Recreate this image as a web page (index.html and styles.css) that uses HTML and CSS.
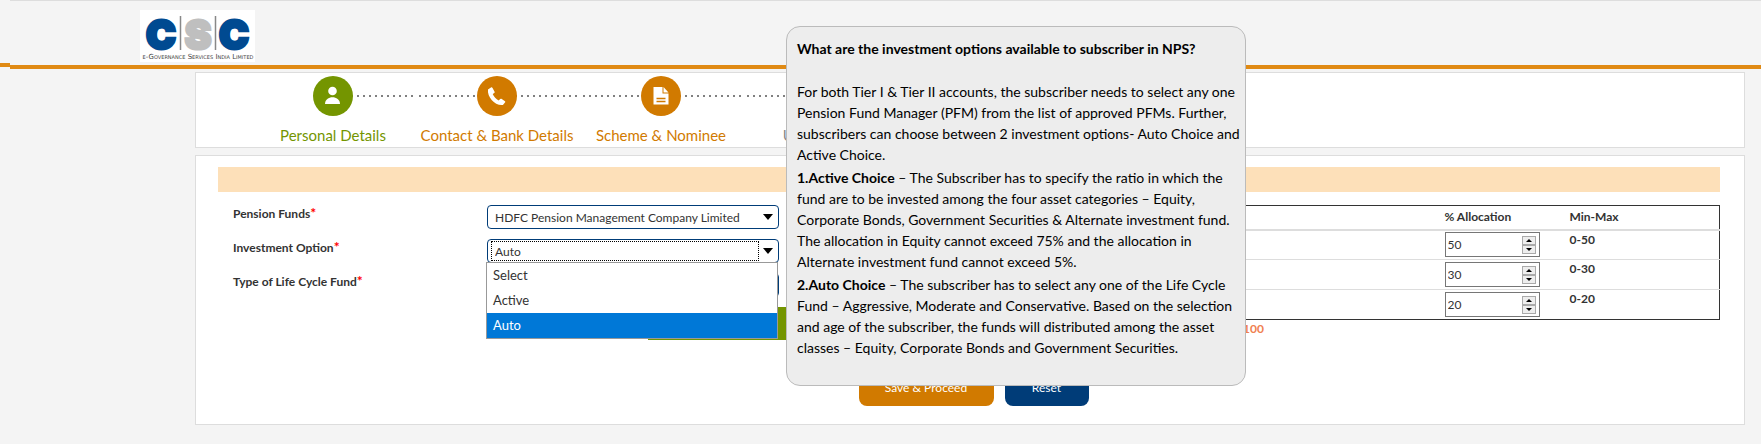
FILE: index.html
```
<!DOCTYPE html>
<html lang="en">
<head>
  <meta charset="UTF-8">
  <meta name="viewport" content="width=device-width, initial-scale=1.0">
  <title>NPS - Scheme &amp; Nominee</title>
  <link rel="stylesheet" href="styles.css">
</head>
<body>
  <div class="top">
    <div class="edge"></div>
    <header class="header">
      <svg class="logo" width="115" height="52" viewBox="0 0 115 52" role="img" aria-label="CSC e-Governance Services India Limited">
        <rect width="115" height="52" fill="#fff"/>
        <g class="logo-letters">
          <text x="21" y="39" fill="#004a91" stroke="#004a91">C</text>
          <text x="58" y="39" fill="#bfbfbf" stroke="#bfbfbf">S</text>
          <text x="94" y="39" fill="#004a91" stroke="#004a91">C</text>
        </g>
        <path d="M40.500 6v34M75.500 6v34" stroke="#888" stroke-width="1.500"/>
        <text class="logo-tag" x="58" y="49">e-Governance Services India Limited</text>
      </svg>
    </header>
  </div>

  <main class="main">
    <!-- Progress steps -->
    <section class="panel">
      <ol class="steps">
        <li class="step done first">
          <span class="step-icon">
            <svg width="40" height="40" viewBox="0 0 40 40"><circle cx="19.500" cy="15" r="4.300" fill="#fff"/><path d="M12 28c0-9 15-9 15 0z" fill="#fff"/></svg>
          </span>
          <span class="step-name">Personal Details</span>
        </li>
        <li class="step active">
          <span class="step-icon">
            <svg width="40" height="40" viewBox="0 0 40 40"><path d="M11 13.500L14.300 11.300Q15 11 15.400 11.700L17.600 15.700Q17.900 16.400 17.300 16.900L15.700 18.100C17 21 19 23 21.700 24.400L23.200 22.900Q23.700 22.500 24.400 22.800L28 25.200Q28.500 25.700 28.200 26.300L25.900 29C18 30 10 21 11 13.500z" fill="#fff"/></svg>
          </span>
          <span class="step-name">Contact &amp; Bank Details</span>
        </li>
        <li class="step active">
          <span class="step-icon">
            <svg width="40" height="40" viewBox="0 0 40 40"><path d="M12.500 11h9v6.500h6V28.500h-15z" fill="#fff"/><path d="M22.500 11l5 5.500h-5z" fill="#fff"/><path d="M15.500 22.500h9M15.500 25.500h9" stroke="#d17a00" stroke-width="1.300"/></svg>
          </span>
          <span class="step-name">Scheme &amp; Nominee</span>
        </li>
        <li class="step">
          <span class="step-icon"></span>
          <span class="step-name">Upload Docs</span>
        </li>
      </ol>
    </section>

    <section class="panel form-panel">
      <div class="banner"></div>
      <form class="form">
        <div class="fields">
          <div class="field">
            <label for="fund">Pension Funds<span class="req">*</span></label>
            <div class="select">
              <select id="fund"><option>HDFC Pension Management Company Limited</option></select>
            </div>
          </div>
          <div class="field">
            <label for="option">Investment Option<span class="req">*</span></label>
            <div class="select open">
              <select id="option">
                <option>Select</option>
                <option>Active</option>
                <option selected>Auto</option>
              </select>
              <ul class="list" role="listbox" aria-label="Investment Option">
                <li role="option">Select</li>
                <li role="option">Active</li>
                <li role="option" class="current" aria-selected="true">Auto</li>
              </ul>
            </div>
          </div>
          <div class="field">
            <label for="cycle">Type of Life Cycle Fund<span class="req">*</span></label>
            <div class="select">
              <select id="cycle"><option></option></select>
            </div>
          </div>
        </div>

        <div class="allocation">
          <table class="alloc-table">
            <thead>
              <tr><th></th><th class="alloc">% Allocation</th><th class="range">Min-Max</th></tr>
            </thead>
            <tbody>
              <tr>
                <td></td>
                <td><div class="number"><input type="number" value="50" aria-label="% Allocation, 0-50"><span class="spin"><button type="button" class="up" aria-label="Increase"></button><button type="button" class="down" aria-label="Decrease"></button></span></div></td>
                <td class="limits">0-50</td>
              </tr>
              <tr>
                <td></td>
                <td><div class="number"><input type="number" value="30" aria-label="% Allocation, 0-30"><span class="spin"><button type="button" class="up" aria-label="Increase"></button><button type="button" class="down" aria-label="Decrease"></button></span></div></td>
                <td class="limits">0-30</td>
              </tr>
              <tr>
                <td></td>
                <td><div class="number"><input type="number" value="20" aria-label="% Allocation, 0-20"><span class="spin"><button type="button" class="up" aria-label="Increase"></button><button type="button" class="down" aria-label="Decrease"></button></span></div></td>
                <td class="limits">0-20</td>
              </tr>
            </tbody>
          </table>
          <div class="total">100</div>
        </div>

        <div class="bar"></div>

        <div class="buttons">
          <button type="submit" class="btn save">Save &amp; Proceed</button>
          <button type="reset" class="btn reset">Reset</button>
        </div>
      </form>
    </section>
  </main>

  <!-- Help popup -->
  <div class="tooltip" role="tooltip">
    <h2>What are the investment options available to subscriber in NPS?</h2>
    <p>For both Tier I &amp; Tier II accounts, the subscriber needs to select any one<br>
    Pension Fund Manager (PFM) from the list of approved PFMs. Further,<br>
    subscribers can choose between 2 investment options- Auto Choice and<br>
    Active Choice.</p>
    <p><b>1.Active Choice</b> – The Subscriber has to specify the ratio in which the<br>
    fund are to be invested among the four asset categories – Equity,<br>
    Corporate Bonds, Government Securities &amp; Alternate investment fund.<br>
    The allocation in Equity cannot exceed 75% and the allocation in<br>
    Alternate investment fund cannot exceed 5%.</p>
    <p><b>2.Auto Choice</b> – The subscriber has to select any one of the Life Cycle<br>
    Fund – Aggressive, Moderate and Conservative. Based on the selection<br>
    and age of the subscriber, the funds will distributed among the asset<br>
    classes – Equity, Corporate Bonds and Government Securities.</p>
  </div>
</body>
</html>
```
FILE: styles.css
```
* {
  box-sizing: border-box;
}

body {
  margin: 0;
  background: #f4f4f4;
  color: #333;
  font-family: Lato, "Open Sans", sans-serif;
  font-size: 12px;
  line-height: 18px;
}

/* Header */
.top {
  display: flex;
  align-items: flex-start;
}

.edge {
  width: 10px;
  height: 67px;
  border-bottom: 4px solid #e08a14;
}

.header {
  flex: 1;
  height: 69px;
  padding: 9px 130px 0;
  border-top: 1px solid #ddd;
  border-bottom: 4px solid #e08a14;
}

.logo {
  display: block;
}

.logo-letters {
  font-family: Inter, sans-serif;
  font-size: 40px;
  font-weight: 900;
  text-anchor: middle;
  stroke-width: 3px;
}

.logo-tag {
  font-family: "DejaVu Sans", sans-serif;
  font-size: 7px;
  font-variant: small-caps;
  text-anchor: middle;
  fill: #444;
}

/* Page body */
.main {
  display: flex;
  flex-direction: column;
  gap: 7px;
  margin: 3px 16px 20px 195px;
}

.panel {
  background: #fff;
  border: 1px solid #ddd;
}

/* Steps */
.steps {
  display: flex;
  list-style: none;
  margin: 0;
  padding: 3px 55px 1px;
}

.step {
  display: flex;
  flex-direction: column;
  align-items: center;
  gap: 9px;
  width: 164px;
  color: #888;
  font-size: 15px;
  line-height: 21px;
  white-space: nowrap;
}

.step-icon {
  display: flex;
  justify-content: center;
  width: 100%;
  height: 40px;
  background: repeating-linear-gradient(90deg, transparent 0 4px, #808080 4px 6px) left center / 162px 2px no-repeat;
}

.first .step-icon {
  background-position: right center;
  background-size: 80px 2px;
}

.step-icon svg {
  border-radius: 50%;
  background: #d17a00;
}

.done .step-icon svg {
  background: #749500;
}

.done {
  color: #749500;
}

.active {
  color: #d17a00;
}

/* Form */
.form-panel {
  padding: 11px 24px 18px 22px;
}

.banner {
  height: 25px;
  background: #fde0b9;
}

.form {
  display: grid;
  grid-template-columns: 561px 1fr;
  column-gap: 8px;
  padding-top: 13px;
}

.fields {
  display: flex;
  flex-direction: column;
  gap: 10px;
}

.field {
  display: flex;
  height: 24px;
}

.field label {
  width: 269px;
  padding-left: 15px;
  font-weight: bold;
}

.req {
  color: #f00;
  font-size: 14px;
  line-height: 14px;
}

.select {
  position: relative;
  flex: 1;
}

.select select {
  display: block;
  appearance: none;
  width: 100%;
  height: 24px;
  padding: 1px 20px 0 7px;
  border: 1px solid #003c78;
  border-radius: 4px;
  background: #fff;
  color: #333;
  font: inherit;
}

.select::after {
  content: "";
  position: absolute;
  top: 9px;
  right: 6px;
  border: 5px solid transparent;
  border-top: 6px solid #000;
  border-bottom: 0;
}

/* Dotted focus ring */
.open::before {
  content: "";
  position: absolute;
  inset: 2px 20px 2px 4px;
  border: 1px dotted #000;
}

.list {
  position: absolute;
  z-index: 1;
  top: 23px;
  left: -1px;
  right: 1px;
  margin: 0;
  padding: 0;
  list-style: none;
  background: #fff;
  border: 1px solid #999;
  font-size: 13px;
}

.list li {
  padding: 0 6px;
  line-height: 25px;
}

.list .current {
  background: #0078d7;
  color: #fff;
}

/* Allocation table */
.alloc-table {
  width: 100%;
  border: 1px solid #333;
  border-collapse: collapse;
}

.alloc-table th {
  height: 24px;
  padding: 0;
  text-align: left;
  border-bottom: 2px solid #ddd;
}

.alloc-table td {
  height: 30px;
  padding: 0;
  border-bottom: 1px solid #ddd;
}

.alloc-table tbody tr:last-child td {
  border-bottom-color: #333;
}

.alloc-table .alloc {
  width: 125px;
}

.alloc-table .range {
  width: 150px;
}

.alloc-table .limits {
  font-weight: bold;
  vertical-align: top;
}

.number {
  display: flex;
  align-items: center;
  width: 95px;
  height: 25px;
  padding: 0 3px 0 2px;
  border: 1px solid #767676;
  background: #fff;
}

.number input {
  flex: 1;
  min-width: 0;
  padding: 0;
  border: 0;
  appearance: textfield;
  color: #333;
  font: inherit;
}

.number input::-webkit-inner-spin-button {
  display: none;
}

.spin {
  display: flex;
  flex-direction: column;
}

.spin button {
  display: flex;
  align-items: center;
  justify-content: center;
  width: 14px;
  height: 9px;
  padding: 0;
  border: 1px solid #aaa;
  background: #eee;
}

.spin button::after {
  content: "";
  border: 3px solid transparent;
}

.spin .up::after {
  border-top: 0;
  border-bottom-color: #000;
}

.spin .down::after {
  border-bottom: 0;
  border-top-color: #000;
}

.total {
  color: #f08050;
  font-weight: bold;
  text-align: center;
}

.bar {
  grid-column: 1 / -1;
  width: 200px;
  height: 33px;
  margin: -31px 0 0 430px;
  background: #749500;
}

.buttons {
  grid-column: 1 / -1;
  display: flex;
  justify-content: center;
  gap: 11px;
  padding: 30px 0 0 9px;
}

.btn {
  height: 36px;
  padding: 0;
  border: 0;
  border-radius: 8px;
  color: #fff;
  font: inherit;
}

.save {
  width: 135px;
  background: #d17a00;
}

.reset {
  width: 84px;
  background: #003c78;
}

/* Help popup */
.tooltip {
  position: absolute;
  z-index: 2;
  top: 26px;
  left: 786px;
  width: 460px;
  padding: 11px 10px 25px;
  background: #ededed;
  border: 1px solid #bbb;
  border-radius: 14px;
  color: #000;
  font-size: 14px;
  line-height: 21px;
  white-space: nowrap;
}

.tooltip h2 {
  margin: 0 0 22px;
  font-size: 14px;
}

.tooltip p {
  margin: 0 0 2px;
}
```
